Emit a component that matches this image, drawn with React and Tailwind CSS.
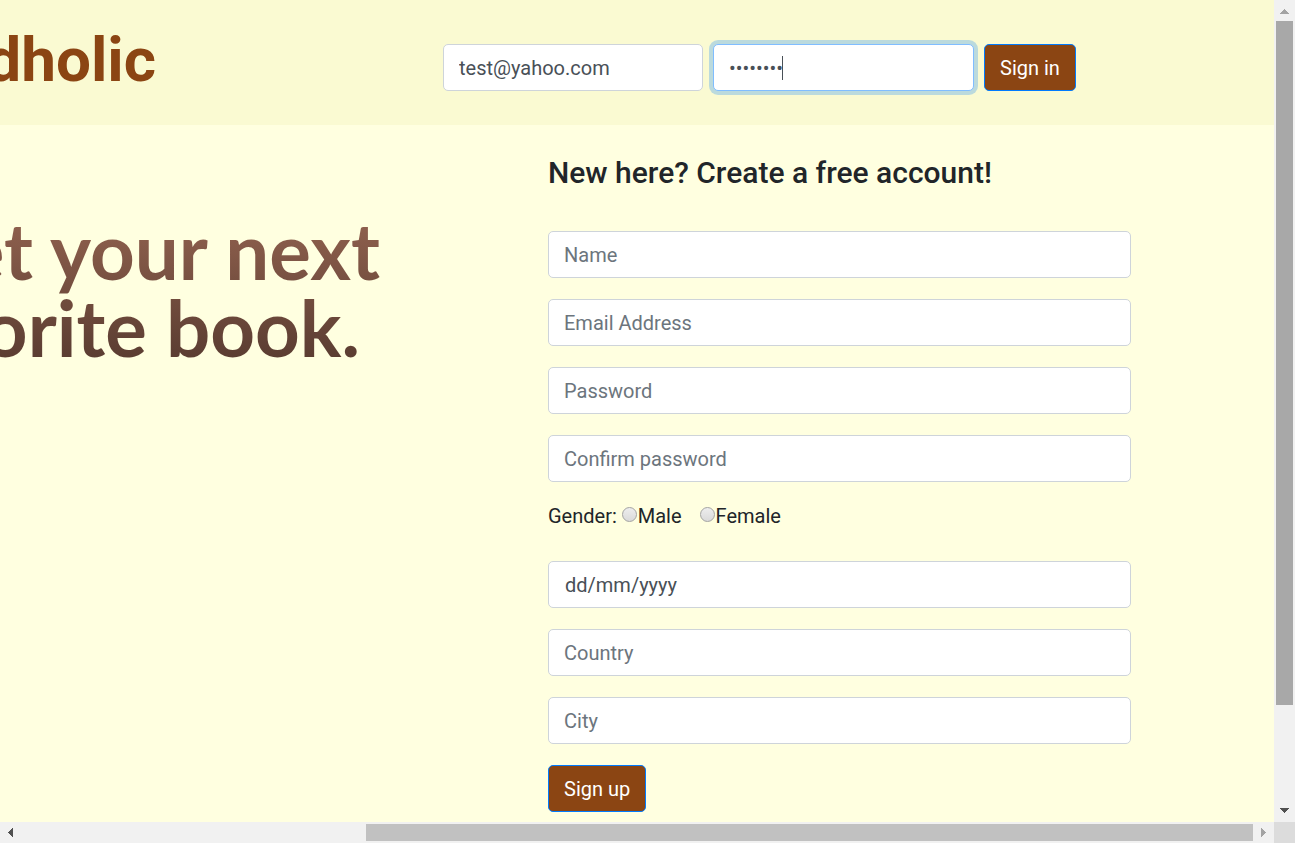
import React from "react";

const field =
  "block h-[47px] w-full rounded-[5px] border border-[#ced4da] bg-white px-[15px] text-xl text-[#495057] outline-none placeholder:text-[#6c757d] placeholder:opacity-100";
const button =
  "h-[47px] rounded-[5px] border border-[#007bff] bg-[#8b4513] px-[15px] text-xl text-white";
const radio =
  "mt-1 mr-px size-[15px] appearance-none rounded-full border border-[#a3a3a3] bg-linear-to-b from-[#ededed] to-[#dadada] checked:bg-[#8b4513]";

function Arrow({ points, fill }) {
  return (
    <svg width="21" height="21" viewBox="0 0 21 21" aria-hidden="true" className="shrink-0" shapeRendering="crispEdges">
      <polygon points={points} fill={fill} />
    </svg>
  );
}

function Field({ id, label, type = "text" }) {
  return (
    <input id={id} name={id} type={type} aria-label={label} placeholder={label} className={field} />
  );
}

function Header() {
  return (
    <header className="flex h-[125px] shrink-0 items-start bg-[#fafad2]">
      <h1 className="flex w-[156px] shrink-0 justify-end overflow-hidden pt-[22px] text-[62px] leading-[76px] font-bold text-[#8b4513]">
        dholic
      </h1>
      <form className="ml-[287px] flex gap-2.5 pt-11" onSubmit={(e) => e.preventDefault()}>
        <div className="w-[260px]">
          <input type="email" aria-label="Email" defaultValue="test@yahoo.com" className={field} />
        </div>
        <div className="relative w-[261px]">
          <input
            type="password"
            aria-label="Password"
            defaultValue="password"
            className="block h-[47px] w-full rounded-[5px] border border-[#80bdff] bg-white px-[15px] text-xl text-[#495057] caret-transparent ring-4 ring-[#007bff]/25 outline-none"
          />
          <span className="absolute top-3 left-[69px] h-6 w-px bg-[#495057]" />
        </div>
        <button type="submit" className={button}>
          Sign in
        </button>
      </form>
    </header>
  );
}

function Hero() {
  return (
    <section className="w-[380px] shrink-0 overflow-hidden pt-[87px]">
      <h2 className="flex flex-col items-end bg-linear-to-b from-[#936350] to-[#583b30] bg-clip-text font-[Lato,sans-serif] text-[78px] leading-[77px] font-bold whitespace-nowrap text-transparent">
        <span>et your next</span>
        <span className="pr-5">orite book.</span>
      </h2>
    </section>
  );
}

function SignUp() {
  return (
    <form
      className="mr-[143px] ml-[168px] flex flex-1 flex-col gap-[21px] pt-[29px]"
      onSubmit={(e) => e.preventDefault()}
    >
      <h2 className="mb-[18px] text-[30px] leading-[38px] font-medium">New here? Create a free account!</h2>
      <Field id="name" label="Name" />
      <Field id="email" label="Email Address" />
      <Field id="password" label="Password" type="password" />
      <Field id="confirm" label="Confirm password" type="password" />
      <div role="radiogroup" aria-label="Gender" className="flex h-[37px] items-start text-xl leading-[26px]">
        <span>Gender:</span>
        <label className="ml-[5px] flex">
          <input type="radio" name="gender" value="male" className={radio} />
          Male
        </label>
        <label className="ml-[18px] flex">
          <input type="radio" name="gender" value="female" className={radio} />
          Female
        </label>
      </div>
      <input
        type="text"
        name="birthday"
        aria-label="Date of birth"
        placeholder="dd/mm/yyyy"
        className="block h-[47px] w-full rounded-[5px] border border-[#ced4da] bg-white px-4 text-xl text-[#495057] outline-none placeholder:text-[#495057] placeholder:opacity-100"
      />
      <Field id="country" label="Country" />
      <Field id="city" label="City" />
      <div>
        <button type="submit" className={button}>
          Sign up
        </button>
      </div>
    </form>
  );
}

export default function App() {
  return (
    <div className="grid h-screen grid-cols-[minmax(0,1fr)_21px] grid-rows-[minmax(0,1fr)_21px] font-[Roboto,sans-serif] text-[#212529]">
      <div className="flex flex-col overflow-hidden bg-[#ffffe0]">
        <Header />
        <main className="flex">
          <Hero />
          <SignUp />
        </main>
      </div>
      <div className="flex flex-col bg-[#f1f1f1]" aria-hidden="true">
        <Arrow points="6,14 10.5,9 15,14" fill="#a3a3a3" />
        <div className="mx-0.5 flex-[684] bg-[#a8a8a8]" />
        <div className="flex-[96]" />
        <Arrow points="6,7 10.5,12 15,7" fill="#505050" />
      </div>
      <div className="flex bg-[#f1f1f1]" aria-hidden="true">
        <Arrow points="13,6 8,10.5 13,15" fill="#505050" />
        <div className="flex-[345]" />
        <div className="my-0.5 flex-[887] bg-[#c1c1c1]" />
        <Arrow points="8,6 13,10.5 8,15" fill="#a3a3a3" />
      </div>
      <div className="bg-[#dcdcdc]" />
    </div>
  );
}
